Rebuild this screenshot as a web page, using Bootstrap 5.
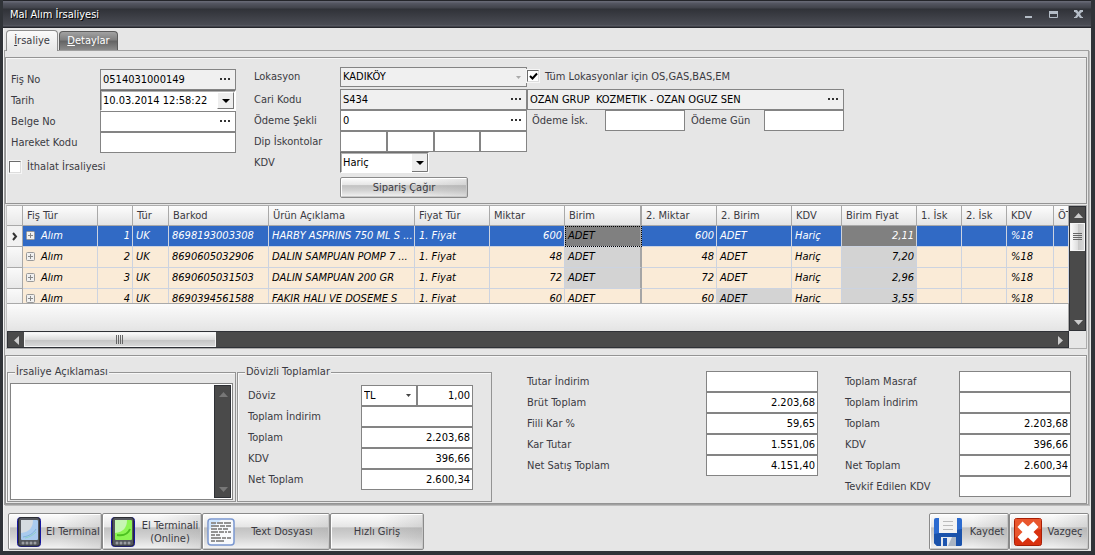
<!DOCTYPE html>
<html lang="tr">
<head>
<meta charset="utf-8">
<meta name="viewport" content="width=device-width, initial-scale=1">
<title>Mal Alım İrsaliyesi</title>
<link href="https://cdn.jsdelivr.net/npm/bootstrap@5.3.0/dist/css/bootstrap.min.css" rel="stylesheet">
<style>
  :root { --face: #e6e6e6; --line: #949494; --ink: #3a3a42; --edge: #848484; }
  body { font: 11px/14px "DejaVu Sans Condensed", "DejaVu Sans", "Open Sans", sans-serif; color: var(--ink); background: #2b2d32; }
  button, input, select, textarea { font: inherit; color: #000; border-radius: 0; }
  .win { min-height: 100vh; border: 3px solid #303338; border-top-width: 0; border-right-width: 4px; border-bottom-width: 4px; }
  .titlebar { height: 28px; padding: 1px 0 0 7px; color: #fff; text-shadow: 1px 1px 0 #000;
    background: linear-gradient(#24252a 0 1px, #666874 1px 2px, #555762 3px, #41434b 8px, #303238 9px, #4a4c54 25px, #5d5f68 26px, #25262c 27px); }
  .capbtn { width: 25px; height: 24px; border: 0; padding: 0; background: none; }
  .client { background: var(--face); border-left: 1px solid #f4f4f4; }

  .tabs { height: 22px; padding-left: 2px; }
  .tabs .tab { border: 1px solid #8c8c8c; border-bottom: 0; border-radius: 4px 4px 0 0; padding: 0 7px; color: var(--ink); }
  .tabs .tab.active { height: 21px; width: 52px; background: linear-gradient(#fafafa, var(--face)); position: relative; z-index: 1; margin-bottom: -1px; }
  .tabs .tab.other { height: 19px; width: 59px; margin-left: 1px; color: #fff; border-color: #5c5c5c; background: linear-gradient(#a2a2a2, #7e7e7e 45%, #636363 50%, #8b8b8b); }

  .pane { border: 1px solid #a0a0a0; margin-right: 2px; padding: 6px 1px 0 0; box-shadow: 1px 1px 0 #bcbcbc; }
  .panel { border: 1px solid var(--line); box-shadow: inset 1px 1px 0 #f7f7f7; }
  .entry { height: 147px; padding: 9px 0 0 5px; }
  .first { margin-top: 2px; }
  .second { margin-left: 18px; }
  .second .rw:first-child { height: 22px; align-items: flex-start; padding-top: 0; }
  .second .rw:first-child label { line-height: 20px; }
  .second .rw:first-child .chk { margin-top: 3px; }
  .rw { display: flex; height: 21px; align-items: center; }
  .rw-import { margin: 3px 0 0 -2px; }
  .w-a { width: 89px; } .w-b { width: 86px; } .w-c { width: 113px; } .w-d { width: 179px; } .w-e { width: 114px; }
  .fld { display: flex; height: 21px; border: 1px solid var(--edge); background: #fff; padding: 0; }
  .fld.ro { background: #f0f0f0; }
  .fld input { flex: 1 1 0; min-width: 0; border: 0; padding: 0 0 0 2px; background: transparent; }
  .fld button { border: 0; width: 19px; padding: 0; background: none; display: flex; align-items: center; justify-content: center; }
  .w136 { width: 136px; } .w187 { width: 187px; } .w317 { width: 317px; } .w56 { width: 56px; }
  .box { height: 21px; border: 1px solid var(--edge); background: #fff; padding: 0 2px; min-width: 0; }
  .num { text-align: right; width: 112px; }
  .num.w56 { width: 56px; }
  .pay { width: 80px; } .pay1 { width: 78px; padding-left: 5px; } .pay2 { width: 79px; padding-left: 6px; }
  .sunken { border: 1px solid; border-color: #707070 #fff #fff #707070; box-shadow: inset 1px 1px 0 #b0b0b0; }
  .fld.sunken button { width: 17px; margin: 1px; border: 1px solid; border-color: #fff #777 #777 #fff; background: #eee; }
  .flatsel { appearance: none; height: 21px; border: 1px solid var(--edge); padding: 0 2px; background: #fff url("data:image/svg+xml,%3Csvg xmlns='http://www.w3.org/2000/svg' width='5' height='3'%3E%3Cpath d='M0 0h5L2.500 3z' fill='%23444'/%3E%3C/svg%3E") no-repeat right 5px center; }
  .flatsel:disabled { opacity: 1; color: #000; height: 20px; background-color: #f0f0f0; background-image: url("data:image/svg+xml,%3Csvg xmlns='http://www.w3.org/2000/svg' width='5' height='3'%3E%3Cpath d='M0 0h5L2.500 3z' fill='%23aaa'/%3E%3C/svg%3E"); }
  .oldsel { appearance: none; width: 89px; height: 21px; padding: 0 2px; background: #fff url("data:image/svg+xml,%3Csvg xmlns='http://www.w3.org/2000/svg' width='16' height='18'%3E%3Cpath d='M0 0h16v18H0z' fill='%23eee'/%3E%3Cpath d='M15.500 0v17.500H0' fill='none' stroke='%23777'/%3E%3Cpath d='M4 7h8L8 11z'/%3E%3C/svg%3E") no-repeat right 0 top 1px; }
  .chk { appearance: none; flex: none; width: 12px; height: 12px; margin: 0; background: #fff no-repeat center; outline: 1px solid #f6f6f6; border: 1px solid; border-color: #6c6c6c #ddd #ddd #6c6c6c; }
  .chk:checked { background-image: url("data:image/svg+xml,%3Csvg xmlns='http://www.w3.org/2000/svg' width='9' height='9'%3E%3Cpath d='M1 4l2.500 2.500L8 1.500' fill='none' stroke='%23000' stroke-width='2'/%3E%3C/svg%3E"); }
  .chk + label { padding-left: 6px; }
  .glass { border: 1px solid #8a8a8a; border-radius: 2px; padding: 0; color: var(--ink); box-shadow: inset 1px 1px 0 #fff, inset -1px -1px 0 #c8c8c8;
    background: linear-gradient(90deg, #9990, #fff0 12%, #fff0 55%, #8883 100%), linear-gradient(#fdfdfd, #e6e6e6 36%, #c2c2c2 40%, #d2d2d2 65%, #f4f4f4); }
  .glass.call { width: 128px; height: 21px; }

  .gridbox { flex: 1 0 143px; margin: 1px 0 0 1px; border: 1px solid #adadad; border-left-color: #c4c4c4; }
  .viewport { flex: 1 1 0; min-height: 0; min-width: 0; overflow: hidden; }
  .lines { table-layout: fixed; width: 100%; border-collapse: separate; border-spacing: 0; white-space: nowrap; }
  .lines th { height: 20px; padding: 0 4px; font-weight: normal; border-right: 1px solid #a9a9a9; border-bottom: 1px solid #a9a9a9; background: linear-gradient(#fdfdfd, #e4e4e4); overflow: hidden; color: var(--ink); }
  .lines td { height: 21px; padding: 0 3px; font-style: italic; color: #000; background: #faebd7; border-right: 1px solid #ccd3e0; border-bottom: 1px solid #ccd3e0; overflow: hidden; }
  .lines tr > :first-child { background: linear-gradient(#fafafa, #e8e8e8); border-color: #a9a9a9; padding: 0; text-align: center; }
  .lines tr.cur td { background: #316ac5; color: #fff; }
  .lines tr.cur td:first-child { background: #f2f2f2; }
  .lines td.gr { background: #d3d3d3; }
  .lines tr.cur td.gr { background: #808080; }
  .lines tr.cur td.focus { color: #000; outline: 1px dotted #000; outline-offset: -1px; }
  .lines .split { border-right: 2px solid #a5a5a5; }
  .lines .r { text-align: right; padding-right: 2px; }
  .lines td.pad { padding-left: 4px; }
  .exp { margin: -2px 6px 0 0; }
  .foot { height: 28px; border-top: 1px solid #a9a9a9; border-right: 1px solid #a9a9a9; background: linear-gradient(#fbfbfb, #e4e4e4); }
  .track { background: #4a4a4a; border: 1px solid #2f3136; }
  .track button { border: 0; padding: 0; background: none; display: flex; align-items: center; justify-content: center; flex: none; width: 16px; height: 16px; }
  .track.v { width: 17px; } .track.h { height: 17px; flex: 1 1 0; }
  .corner { width: 17px; }
  .thumb { display: flex; align-items: center; justify-content: center; background: linear-gradient(#fafafa, #dcdcdc 50%, #c4c4c4 55%, #d8d8d8); border: 1px solid #f4f4f4; }
  .track.v .thumb { height: 28px; background: linear-gradient(90deg, #fafafa, #dedede 50%, #c8c8c8 55%, #d8d8d8); }
  .track.h .thumb { width: 192px; }

  .sums { min-height: 149px; margin-top: 6px; padding: 15px 0 0 1px; }
  .grp { border: 1px solid var(--line); box-shadow: inset 1px 1px 0 #f7f7f7; position: relative; margin-top: 1px; height: 130px; padding: 10px 2px 1px; }
  .grp legend { position: absolute; top: -8px; left: 7px; width: auto; margin: 0; padding: 0 1px; font-size: 11px; line-height: 14px; background: var(--face); }
  .grp-sum { width: 255px; margin-left: 1px; padding: 12px 0 0 10px; }
  .note { border: 1px solid var(--edge); background: #fff; }
  .note textarea { flex: 1 1 0; min-width: 0; border: 0; resize: none; outline: 0; }
  .note .track { margin: 1px; }
  .col3 { margin-left: 35px; }
  .col4 { margin: 0 15px 0 27px; }
  .bar { padding: 8px 2px 2px 4px; height: 46px; }
  .cmd { height: 37px; line-height: 13px; display: flex; align-items: center; }
  .cmd-s { width: 80px; } .cmd-m { width: 94px; } .cmd-l { width: 100px; } .cmd-xl { width: 128px; }
</style>
</head>
<body>
<svg class="d-none">
  <symbol id="dots" viewBox="0 0 11 3"><path d="M0 0h2v2H0zM4 0h2v2H4zM8 0h2v2H8z" fill="#333"/></symbol>
  <symbol id="plus" viewBox="0 0 9 9"><rect x=".5" y=".5" width="8" height="8" rx="1" fill="#f0f0f0" stroke="#999"/><path d="M2 4.500h5M4.500 2v5" stroke="#888"/></symbol>
  <symbol id="up" viewBox="0 0 9 5"><path d="M0 5h9L4.500 0z" fill="currentColor"/></symbol>
  <symbol id="down" viewBox="0 0 9 5"><path d="M0 0h9L4.500 5z" fill="currentColor"/></symbol>
</svg>
<div class="win d-flex flex-column">
  <header class="titlebar d-flex align-items-center">
    <span class="flex-grow-1">Mal Alım İrsaliyesi</span>
    <button class="capbtn" aria-label="Küçült"><svg width="9" height="9"><path d="M1 6h7v2H1z" fill="#b4bcc6"/></svg></button>
    <button class="capbtn" aria-label="Büyüt"><svg width="9" height="9"><path d="M.5 1.500h8v6h-8z" fill="none" stroke="#b4bcc6"/><path d="M0 1h9v3H0z" fill="#b4bcc6"/></svg></button>
    <button class="capbtn" aria-label="Kapat"><svg width="9" height="9"><path d="M0 0h3l1.500 2L6 0h3v2H8L6 4l2 3h1v1H6L4.500 6 3 8H0V7h1l2-3-2-2H0z" fill="#b4bcc6"/></svg></button>
  </header>

  <main class="client flex-grow-1 d-flex flex-column">
    <nav class="tabs d-flex align-items-end">
      <button class="tab active" type="button"><u>İ</u>rsaliye</button>
      <button class="tab other" type="button"><u>D</u>etaylar</button>
    </nav>

    <div class="pane flex-grow-1 d-flex flex-column">
      <section class="panel entry d-flex">
        <div class="first flex-shrink-0">
          <div class="rw"><label class="w-a" for="fis">Fiş No</label><div class="fld ro w136"><input id="fis" value="0514031000149"><button type="button" aria-label="Seç"><svg width="11" height="3"><use href="#dots"/></svg></button></div></div>
          <div class="rw"><label class="w-a" for="tarih">Tarih</label><div class="fld sunken w136"><input id="tarih" value="10.03.2014 12:58:22"><button type="button" aria-label="Takvim"><svg width="8" height="4"><path d="M0 0h8L4 4z"/></svg></button></div></div>
          <div class="rw"><label class="w-a" for="belge">Belge No</label><div class="fld w136"><input id="belge"><button type="button" aria-label="Seç"><svg width="11" height="3"><use href="#dots"/></svg></button></div></div>
          <div class="rw"><label class="w-a" for="hareket">Hareket Kodu</label><input class="box w136" id="hareket"></div>
          <div class="rw rw-import"><input type="checkbox" class="chk" id="ithalat"><label for="ithalat">İthalat İrsaliyesi</label></div>
        </div>

        <div class="second flex-shrink-0">
          <div class="rw"><label class="w-b" for="lok">Lokasyon</label><select class="flatsel w187" id="lok" disabled><option>KADIKÖY</option></select>
            <input type="checkbox" class="chk" id="tum" checked><label for="tum">Tüm Lokasyonlar için OS,GAS,BAS,EM</label></div>
          <div class="rw"><label class="w-b" for="cari">Cari Kodu</label><div class="fld ro w187"><input id="cari" value="S434"><button type="button" aria-label="Seç"><svg width="11" height="3"><use href="#dots"/></svg></button></div>
            <div class="fld ro w317"><input aria-label="Cari adı" value="OZAN GRUP  KOZMETIK - OZAN OGUZ SEN"><button type="button" aria-label="Seç"><svg width="11" height="3"><use href="#dots"/></svg></button></div></div>
          <div class="rw"><label class="w-b" for="odeme">Ödeme Şekli</label><div class="fld w187"><input id="odeme" value="0"><button type="button" aria-label="Seç"><svg width="11" height="3"><use href="#dots"/></svg></button></div>
            <label class="pay1" for="oisk">Ödeme İsk.</label><input class="box pay" id="oisk"><label class="pay2" for="ogun">Ödeme Gün</label><input class="box pay" id="ogun"></div>
          <div class="rw"><label class="w-b" for="d1">Dip İskontolar</label><div class="d-flex w187"><input id="d1" class="box flex-fill w-25"><input aria-label="İskonto 2" class="box flex-fill w-25"><input aria-label="İskonto 3" class="box flex-fill w-25"><input aria-label="İskonto 4" class="box flex-fill w-25"></div></div>
          <div class="rw"><label class="w-b" for="kdv">KDV</label><select class="oldsel sunken" id="kdv"><option>Hariç</option></select></div>
          <div class="rw mt-1"><span class="w-b"></span><button type="button" class="glass call">Sipariş Çağır</button></div>
        </div>
      </section>

      <section class="gridbox d-flex flex-column">
        <div class="d-flex flex-grow-1">
          <div class="d-flex flex-column flex-grow-1 overflow-hidden">
            <div class="viewport">
              <table class="lines">
                <colgroup><col style="width:16px"><col style="width:75px"><col style="width:35px"><col style="width:36px"><col style="width:100px"><col style="width:146px"><col style="width:75px"><col style="width:75px"><col style="width:77px"><col style="width:75px"><col style="width:75px"><col style="width:50px"><col style="width:75px"><col style="width:45px"><col style="width:45px"><col style="width:47px"><col></colgroup>
                <thead><tr><th></th><th>Fiş Tür</th><th></th><th>Tür</th><th>Barkod</th><th>Ürün Açıklama</th><th>Fiyat Tür</th><th>Miktar</th><th class="split">Birim</th><th>2. Miktar</th><th>2. Birim</th><th>KDV</th><th>Birim Fiyat</th><th>1. İsk</th><th>2. İsk</th><th>KDV</th><th>ÖT</th></tr></thead>
                <tbody>
                  <tr class="cur"><td><svg width="6" height="9"><path d="M1 1l3 3.500L1 8" fill="none" stroke="#333" stroke-width="2"/></svg></td><td><svg class="exp" width="9" height="9"><use href="#plus"/></svg>Alım</td><td class="r">1</td><td>UK</td><td>8698193003308</td><td>HARBY ASPRINS 750 ML S ...</td><td class="pad">1. Fiyat</td><td class="r">600</td><td class="gr focus split">ADET</td><td class="r">600</td><td>ADET</td><td>Hariç</td><td class="r gr">2,11</td><td></td><td></td><td class="pad">%18</td><td></td></tr>
                  <tr><td></td><td><svg class="exp" width="9" height="9"><use href="#plus"/></svg>Alım</td><td class="r">2</td><td>UK</td><td>8690605032906</td><td>DALIN SAMPUAN POMP 7 ...</td><td class="pad">1. Fiyat</td><td class="r">48</td><td class="gr split">ADET</td><td class="r">48</td><td>ADET</td><td>Hariç</td><td class="r gr">7,20</td><td></td><td></td><td class="pad">%18</td><td></td></tr>
                  <tr><td></td><td><svg class="exp" width="9" height="9"><use href="#plus"/></svg>Alım</td><td class="r">3</td><td>UK</td><td>8690605031503</td><td>DALIN SAMPUAN 200 GR</td><td class="pad">1. Fiyat</td><td class="r">72</td><td class="gr split">ADET</td><td class="r">72</td><td>ADET</td><td>Hariç</td><td class="r gr">2,96</td><td></td><td></td><td class="pad">%18</td><td></td></tr>
                  <tr><td></td><td><svg class="exp" width="9" height="9"><use href="#plus"/></svg>Alım</td><td class="r">4</td><td>UK</td><td>8690394561588</td><td>FAKIR HALI VE DOSEME S</td><td class="pad">1. Fiyat</td><td class="r">60</td><td class="split">ADET</td><td class="r">60</td><td class="gr">ADET</td><td>Hariç</td><td class="r gr">3,55</td><td></td><td></td><td class="pad">%18</td><td></td></tr>
                </tbody>
              </table>
            </div>
            <div class="foot"></div>
          </div>
          <div class="track v d-flex flex-column flex-shrink-0">
            <button type="button" aria-label="Yukarı"><svg width="9" height="5" color="#ccc"><use href="#up"/></svg></button>
            <div class="thumb"><svg width="9" height="8"><path d="M0 .5h9M0 2.500h9M0 4.500h9M0 6.500h9" stroke="#666"/></svg></div>
            <button type="button" class="mt-auto" aria-label="Aşağı"><svg width="9" height="5" color="#ccc"><use href="#down"/></svg></button>
          </div>
        </div>
        <div class="d-flex">
          <div class="track h d-flex">
            <button type="button" aria-label="Sola"><svg width="5" height="9"><path d="M5 0v9L0 4.500z" fill="#ccc"/></svg></button>
            <div class="thumb"><svg width="8" height="9"><path d="M.5 0v9M2.500 0v9M4.500 0v9M6.500 0v9" stroke="#666"/></svg></div>
            <button type="button" class="ms-auto" aria-label="Sağa"><svg width="5" height="9"><path d="M0 0v9l5-4.500z" fill="#ccc"/></svg></button>
          </div>
          <span class="corner"></span>
        </div>
      </section>

      <section class="panel sums d-flex align-items-start">
        <fieldset class="grp flex-grow-1 d-flex">
          <legend>İrsaliye Açıklaması</legend>
          <div class="note d-flex flex-grow-1">
            <textarea aria-label="İrsaliye Açıklaması"></textarea>
            <div class="track v d-flex flex-column justify-content-between">
              <button type="button" aria-label="Yukarı"><svg width="9" height="5" color="#777"><use href="#up"/></svg></button>
              <button type="button" aria-label="Aşağı"><svg width="9" height="5" color="#777"><use href="#down"/></svg></button>
            </div>
          </div>
        </fieldset>
        <fieldset class="grp grp-sum">
          <legend>Dövizli Toplamlar</legend>
          <div class="rw"><label class="w-c" for="doviz">Döviz</label><select class="flatsel w56" id="doviz"><option>TL</option></select><input class="box num w56" aria-label="Kur" value="1,00"></div>
          <div class="rw"><label class="w-c" for="x1">Toplam İndirim</label><input class="box num" id="x1"></div>
          <div class="rw"><label class="w-c" for="x2">Toplam</label><input class="box num" id="x2" value="2.203,68"></div>
          <div class="rw"><label class="w-c" for="x3">KDV</label><input class="box num" id="x3" value="396,66"></div>
          <div class="rw"><label class="w-c" for="x4">Net Toplam</label><input class="box num" id="x4" value="2.600,34"></div>
        </fieldset>
        <div class="col3">
          <div class="rw"><label class="w-d" for="y1">Tutar İndirim</label><input class="box num" id="y1"></div>
          <div class="rw"><label class="w-d" for="y2">Brüt Toplam</label><input class="box num" id="y2" value="2.203,68"></div>
          <div class="rw"><label class="w-d" for="y3">Fiili Kar %</label><input class="box num" id="y3" value="59,65"></div>
          <div class="rw"><label class="w-d" for="y4">Kar Tutar</label><input class="box num" id="y4" value="1.551,06"></div>
          <div class="rw"><label class="w-d" for="y5">Net Satış Toplam</label><input class="box num" id="y5" value="4.151,40"></div>
        </div>
        <div class="col4">
          <div class="rw"><label class="w-e" for="z1">Toplam Masraf</label><input class="box num" id="z1"></div>
          <div class="rw"><label class="w-e" for="z2">Toplam İndirim</label><input class="box num" id="z2"></div>
          <div class="rw"><label class="w-e" for="z3">Toplam</label><input class="box num" id="z3" value="2.203,68"></div>
          <div class="rw"><label class="w-e" for="z4">KDV</label><input class="box num" id="z4" value="396,66"></div>
          <div class="rw"><label class="w-e" for="z5">Net Toplam</label><input class="box num" id="z5" value="2.600,34"></div>
          <div class="rw"><label class="w-e" for="z6">Tevkif Edilen KDV</label><input class="box num" id="z6"></div>
        </div>
      </section>
    </div>

    <footer class="bar d-flex">
      <button type="button" class="glass cmd cmd-m text-nowrap">
        <svg class="ms-2 me-1" width="24" height="30" viewBox="0 0 24 30"><rect x=".5" y=".5" width="23" height="29" rx="3" fill="#4b4e54" stroke="#1616a0"/><rect x="1.500" y=".5" width="21" height="28.500" rx="2.500" fill="#55585e" stroke="#2c2e33"/><rect x="4" y="3" width="17" height="20" rx="1" fill="#a9cbee"/><path d="M4 3h12c0 8-4 12-12 13z" fill="#d5dbe0"/><path d="M6 20c6-1 10-3 13-8" fill="none" stroke="#7fb3da"/><path d="M8 21c5-1 8-3 11-6" fill="none" stroke="#8fd0c4"/><g fill="#9a9da2"><circle cx="6" cy="26" r="1.500"/><circle cx="10" cy="26" r="1.500"/><circle cx="14" cy="26" r="1.500"/><circle cx="18" cy="26" r="1.500"/></g></svg><span class="flex-grow-1">El Terminal</span></button>
      <button type="button" class="glass cmd cmd-l">
        <svg class="ms-2 me-1" width="24" height="30" viewBox="0 0 24 30"><rect x=".5" y=".5" width="23" height="29" rx="3" fill="#4b4e54" stroke="#1616a0"/><rect x="1.500" y=".5" width="21" height="28.500" rx="2.500" fill="#55585e" stroke="#2c2e33"/><rect x="4" y="3" width="17" height="20" rx="1" fill="#8cf552"/><path d="M4 3h12c0 8-4 12-12 13z" fill="#c6f5b4"/><path d="M6 18c6 1 11-1 13-6" fill="none" stroke="#4cc020" stroke-width="2"/><g fill="#9a9da2"><circle cx="6" cy="26" r="1.500"/><circle cx="10" cy="26" r="1.500"/><circle cx="14" cy="26" r="1.500"/><circle cx="18" cy="26" r="1.500"/></g></svg><span class="flex-grow-1">El Terminali<br>(Online)</span></button>
      <button type="button" class="glass cmd cmd-xl">
        <svg class="ms-1" width="28" height="28" viewBox="0 0 28 28"><rect x="1" y="1" width="26" height="26" rx="3" fill="#f7f9fc" stroke="#7a97d0" stroke-width="1.500"/><path d="M2 12V4a2 2 0 0 1 2-2h10z" fill="#cfe6ff"/><path d="M4 4h5v2H4zM10 4h6v2h-6zM17 4h7v2h-7zM4 7h8v2H4zM13 7h5v2h-5zM19 7h5v2h-5zM4 10h6v2H4zM11 10h4v2h-4zM16 10h5v2h-5zM4 13h7v2H4zM12 13h5v2h-5zM18 13h2v2h-2zM21 13h3v2h-3zM4 16h4v2H4zM9 16h4v2H9zM4 19h10v2H4zM15 19h4v2h-4zM20 19h4v2h-4zM4 22h4v2H4zM9 22h8v2H9z" fill="#939393"/></svg><span class="flex-grow-1">Text Dosyası</span></button>
      <button type="button" class="glass cmd cmd-m justify-content-center me-auto">Hızlı Giriş</button>
      <button type="button" class="glass cmd cmd-s">
        <svg class="ms-1" width="28" height="28" viewBox="0 0 28 28"><path d="M2 0h24a2 2 0 0 1 2 2v24a2 2 0 0 1-2 2H3l-3-3V2a2 2 0 0 1 2-2z" fill="#2c6bd0"/><path d="M0 16l28-5v15a2 2 0 0 1-2 2H3l-3-3z" fill="#1a52ab"/><path d="M5 0h18v15H5z" fill="#f3f3f3"/><path d="M9 3.500h10M9 7.500h10M9 11.500h10" stroke="#bbb"/><path d="M7 19h15v9H7z" fill="#e4e8ee"/><path d="M9 20h4v8H9z" fill="#1d55b0"/><path d="M18 19h4v9h-8z" fill="#a9b4c4"/></svg><span class="flex-grow-1 ps-1">Kaydet</span></button>
      <button type="button" class="glass cmd cmd-s">
        <svg class="ms-1" width="28" height="28" viewBox="0 0 28 28"><rect x=".5" y=".5" width="27" height="27" rx="2" fill="#d9310f" stroke="#a81f06"/><path d="M1 1h26v10C18 12 8 14 1 20z" fill="#f0663a" opacity=".7"/><path d="M8.500 3.500l5.500 5 5.500-5 5 5.500-5 5 5 5-5 5.500-5.500-5-5.500 5-5-5.500 5-5-5-5z" fill="#fff"/></svg><span class="flex-grow-1">Vazgeç</span></button>
    </footer>
  </main>
</div>
<script src="https://cdn.jsdelivr.net/npm/bootstrap@5.3.0/dist/js/bootstrap.bundle.min.js"></script>
</body>
</html>
